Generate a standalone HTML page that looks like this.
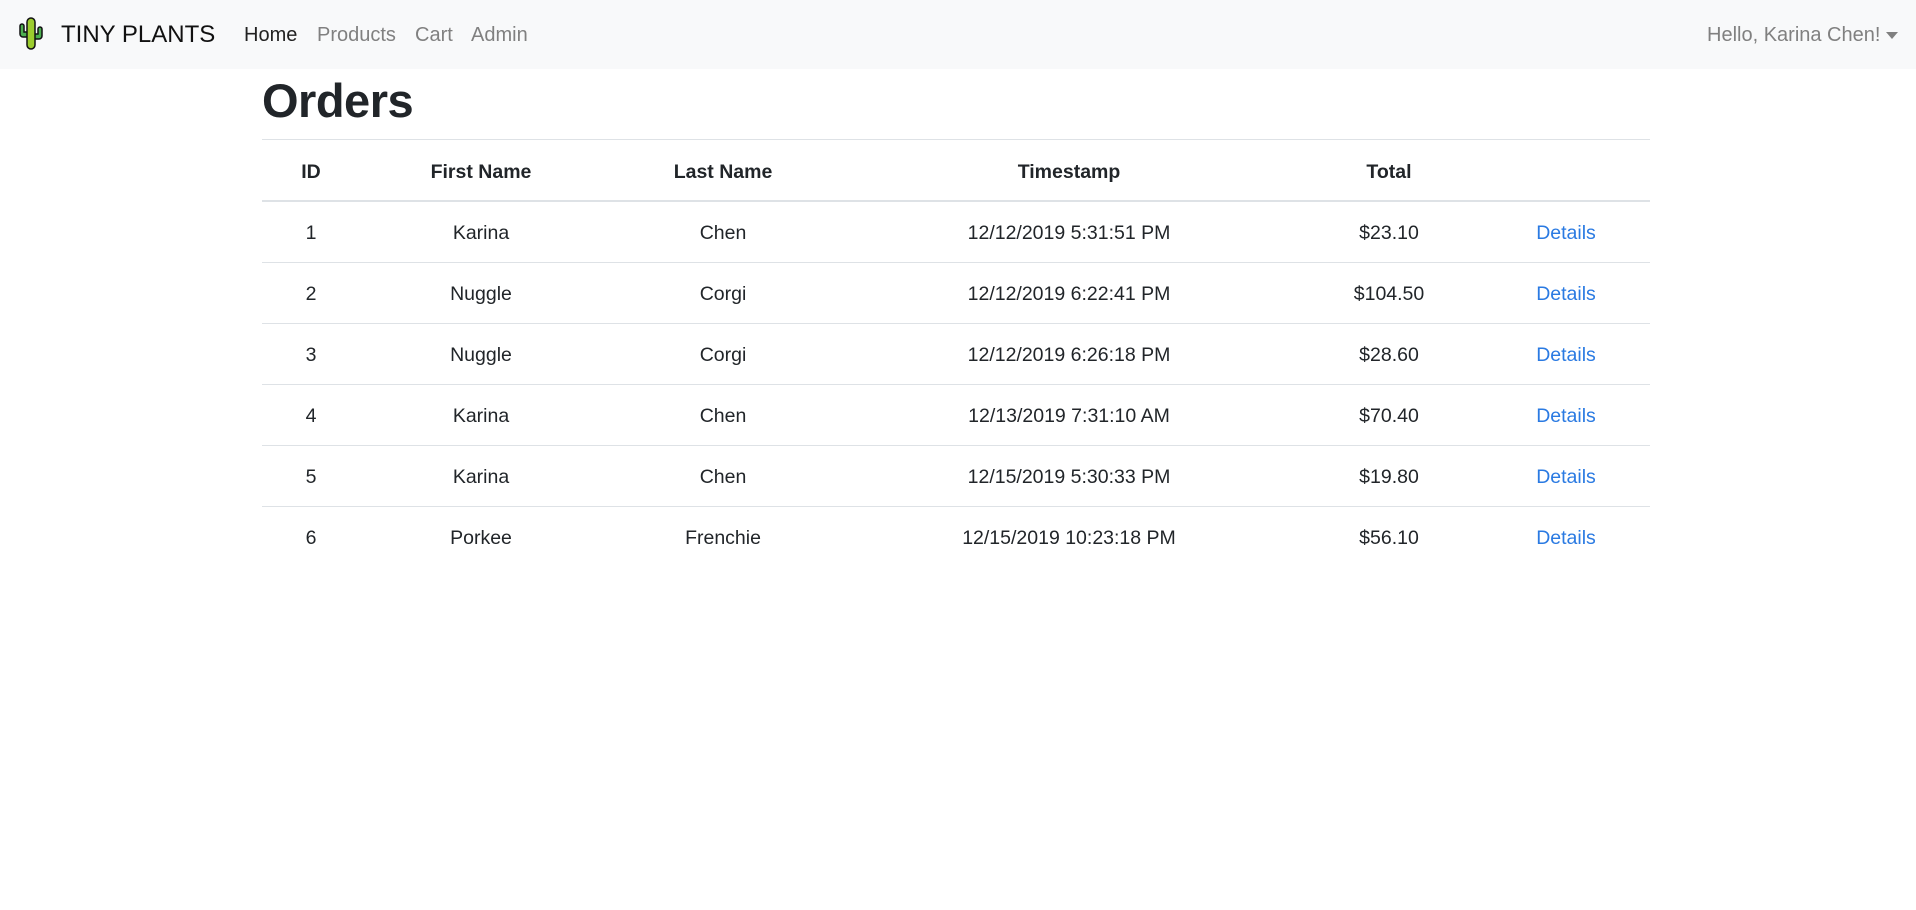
<!DOCTYPE html>
<html><head><meta charset="utf-8"><style>
*{box-sizing:border-box;margin:0;padding:0}
body{width:1916px;height:910px;background:#fff;font-family:"Liberation Sans",sans-serif;color:#212529;position:relative;overflow:hidden}
.nav{position:absolute;left:0;top:0;width:1916px;height:69px;background:#f8f9fa}
.t{position:absolute;white-space:nowrap}
.brand{left:61px;top:21px;font-size:24px;color:#111}
.nl{top:24px;font-size:20px;color:#808080}
h1{position:absolute;left:262px;top:73px;font-size:47px;font-weight:bold;color:#212529;letter-spacing:-0.5px}
.line{position:absolute;left:262px;width:1388px;height:1px;background:#dee2e6}
.c{position:absolute;transform:translateX(-50%);font-size:19.5px;white-space:nowrap}
.h{font-weight:bold}
.a{color:#2a7ae2}
</style></head><body>
<div class="nav">
<svg style="position:absolute;left:18px;top:17px" width="26" height="33" viewBox="0 0 26 33">
<path d="M9 20 H5 a3 3 0 0 1 -3 -3 V9 a2 2 0 0 1 4 0 V15 H9" fill="#4caf50" stroke="#111" stroke-width="1.5"/>
<path d="M17 22 H21 a3 3 0 0 0 3 -3 V12 a2 2 0 0 0 -4 0 V17 H17" fill="#4caf50" stroke="#111" stroke-width="1.5"/>
<rect x="9" y="1" width="8" height="31" rx="4" fill="#9ccd2e" stroke="#111" stroke-width="1.5"/>
</svg>
<div class="t brand">TINY PLANTS</div>
<div class="t nl" style="left:244px;color:#222">Home</div>
<div class="t nl" style="left:317px">Products</div>
<div class="t nl" style="left:415px">Cart</div>
<div class="t nl" style="left:471px">Admin</div>
<div class="t nl" style="left:1707px">Hello, Karina Chen!</div>
<svg style="position:absolute;left:1886px;top:32px" width="12" height="7"><path d="M0 0H12L6 7Z" fill="#808080"/></svg>
</div>
<h1>Orders</h1>
<div class="line" style="top:139px"></div>
<div class="line" style="top:200px;height:2px"></div>
<div class="line" style="top:262px"></div>
<div class="line" style="top:323px"></div>
<div class="line" style="top:384px"></div>
<div class="line" style="top:445px"></div>
<div class="line" style="top:506px"></div>
<div class="c h" style="left:311px;top:161px">ID</div>
<div class="c h" style="left:481px;top:161px">First Name</div>
<div class="c h" style="left:723px;top:161px">Last Name</div>
<div class="c h" style="left:1069px;top:161px">Timestamp</div>
<div class="c h" style="left:1389px;top:161px">Total</div>

<div class="c" style="left:311px;top:222px">1</div><div class="c" style="left:481px;top:222px">Karina</div><div class="c" style="left:723px;top:222px">Chen</div><div class="c" style="left:1069px;top:222px">12/12/2019 5:31:51 PM</div><div class="c" style="left:1389px;top:222px">$23.10</div><div class="c a" style="left:1566px;top:222px">Details</div>
<div class="c" style="left:311px;top:283px">2</div><div class="c" style="left:481px;top:283px">Nuggle</div><div class="c" style="left:723px;top:283px">Corgi</div><div class="c" style="left:1069px;top:283px">12/12/2019 6:22:41 PM</div><div class="c" style="left:1389px;top:283px">$104.50</div><div class="c a" style="left:1566px;top:283px">Details</div>
<div class="c" style="left:311px;top:344px">3</div><div class="c" style="left:481px;top:344px">Nuggle</div><div class="c" style="left:723px;top:344px">Corgi</div><div class="c" style="left:1069px;top:344px">12/12/2019 6:26:18 PM</div><div class="c" style="left:1389px;top:344px">$28.60</div><div class="c a" style="left:1566px;top:344px">Details</div>
<div class="c" style="left:311px;top:405px">4</div><div class="c" style="left:481px;top:405px">Karina</div><div class="c" style="left:723px;top:405px">Chen</div><div class="c" style="left:1069px;top:405px">12/13/2019 7:31:10 AM</div><div class="c" style="left:1389px;top:405px">$70.40</div><div class="c a" style="left:1566px;top:405px">Details</div>
<div class="c" style="left:311px;top:466px">5</div><div class="c" style="left:481px;top:466px">Karina</div><div class="c" style="left:723px;top:466px">Chen</div><div class="c" style="left:1069px;top:466px">12/15/2019 5:30:33 PM</div><div class="c" style="left:1389px;top:466px">$19.80</div><div class="c a" style="left:1566px;top:466px">Details</div>
<div class="c" style="left:311px;top:527px">6</div><div class="c" style="left:481px;top:527px">Porkee</div><div class="c" style="left:723px;top:527px">Frenchie</div><div class="c" style="left:1069px;top:527px">12/15/2019 10:23:18 PM</div><div class="c" style="left:1389px;top:527px">$56.10</div><div class="c a" style="left:1566px;top:527px">Details</div>
</body></html>
